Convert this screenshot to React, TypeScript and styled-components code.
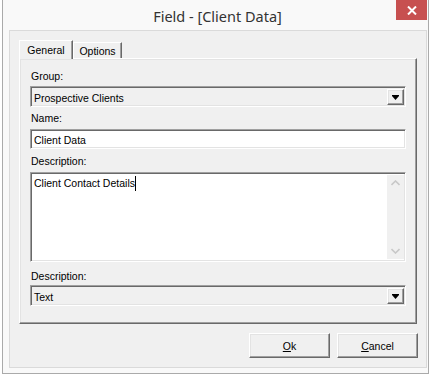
import styled, { createGlobalStyle, css } from "styled-components";

const GlobalStyle = createGlobalStyle`
  html, body {
    margin: 0;
    padding: 0;
    background: #ffffff;
  }
  body {
    font-family: "Liberation Sans", Arial, sans-serif;
    color: #000;
  }
`;

const sunken = css`
  box-sizing: border-box;
  border: 1px solid;
  border-color: #a0a0a0 #ffffff #ffffff #a0a0a0;
  box-shadow: inset 1px 1px 0 #696969, inset -1px -1px 0 #e3e3e3;
`;

const raised = css`
  box-sizing: border-box;
  border: 1px solid;
  border-color: #ffffff #696969 #696969 #ffffff;
  box-shadow: inset -1px -1px 0 #a0a0a0, inset 1px 1px 0 #e3e3e3;
`;

const Window = styled.div`
  position: relative;
  box-sizing: border-box;
  width: 427px;
  height: 374px;
  margin: 0 1px 1px 2px;
  background: #f9f9f9;
  border: 1px solid #aaaaaa;
  border-top: none;
  display: flex;
  flex-direction: column;
`;

const TitleBar = styled.div`
  height: 30px;
  display: flex;
  align-items: center;
  justify-content: center;
  font-family: "Noto Sans", "Open Sans", sans-serif;
  font-size: 14.5px;
  color: #333333;
  padding-top: 1px;
  padding-left: 4px;
  box-sizing: border-box;
`;

const CloseButton = styled.div`
  position: absolute;
  top: 0;
  right: 1px;
  width: 31px;
  height: 20px;
  background: #c75050;
  display: flex;
  align-items: center;
  justify-content: center;
`;

const Client = styled.div`
  margin: 0 1px 5px 6px;
  flex: 1;
  box-sizing: border-box;
  border: 1px solid #dadada;
  background: #f0f0f0;
  padding: 9px 9px 9px 9px;
  display: flex;
  flex-direction: column;
`;

const TabRow = styled.div`
  height: 18px;
  display: flex;
  align-items: flex-end;
  position: relative;
  z-index: 1;
`;

const Tab = styled.div<{ $active?: boolean }>`
  box-sizing: border-box;
  font-size: 10.5px;
  display: flex;
  align-items: center;
  justify-content: center;
  background: #f0f0f0;
  border-top: 1px solid #ffffff;
  border-left: 1px solid #ffffff;
  border-right: 1px solid #696969;
  box-shadow: inset -1px 0 0 #a0a0a0;
  width: ${(p) => (p.$active ? "54px" : "49px")};
  height: ${(p) => (p.$active ? "19px" : "16px")};
  margin-bottom: ${(p) => (p.$active ? "-1px" : "0")};
  padding-top: ${(p) => (p.$active ? "0" : "1px")};
`;

const Panel = styled.div`
  ${raised};
  height: 266px;
  background: #f0f0f0;
  padding: 11px 10px 0 10px;
  display: flex;
  flex-direction: column;
`;

const Label = styled.div<{ $top: number; $gap: number }>`
  font-size: 10.5px;
  line-height: 13px;
  height: 13px;
  padding-left: 1px;
  margin-top: ${(p) => p.$top}px;
  margin-bottom: ${(p) => p.$gap}px;
`;

const Combo = styled.div`
  ${sunken};
  height: 21px;
  background: #f0f0f0;
  display: flex;
  align-items: stretch;
  padding: 2px 1px 1px 3px;
  font-size: 10.5px;
`;

const ComboText = styled.div`
  flex: 1;
  display: flex;
  align-items: center;
  padding-top: 1px;
`;

const DropButton = styled.div`
  ${raised};
  width: 17px;
  background: #f0f0f0;
  display: flex;
  align-items: center;
  justify-content: center;
`;

const TextInput = styled.div`
  ${sunken};
  height: 20px;
  background: #ffffff;
  padding: 2px 3px 0 3px;
  font-size: 10.5px;
  display: flex;
  align-items: center;
`;

const TextArea = styled.div`
  ${sunken};
  height: 90px;
  background: #ffffff;
  display: flex;
  padding: 2px 1px 2px 2px;
  font-size: 10.5px;
`;

const AreaText = styled.div`
  flex: 1;
  padding: 2px 1px;
  line-height: 13px;
  display: flex;
  align-items: flex-start;
`;

const Caret = styled.span`
  display: inline-block;
  width: 1px;
  height: 15px;
  background: #000;
  margin-top: -1px;
`;

const ScrollBar = styled.div`
  width: 17px;
  background: #f0f0f0;
  display: flex;
  flex-direction: column;
  justify-content: space-between;
  align-items: center;
  padding: 5px 0 5px;
`;

const ButtonRow = styled.div`
  margin-top: 9px;
  margin-right: -1px;
  display: flex;
  justify-content: flex-end;
  gap: 7px;
`;

const Button = styled.div`
  ${raised};
  width: 81px;
  height: 25px;
  background: #f0f0f0;
  font-size: 10.5px;
  display: flex;
  align-items: center;
  justify-content: center;
`;

const Access = styled.span`
  text-decoration: underline;
  text-underline-offset: 1px;
`;

const Arrow = () => (
  <svg width="7" height="5" viewBox="0 0 7 5">
    <rect x="0" y="0" width="7" height="1" fill="#000" />
    <polygon points="0,1 7,1 3.5,5" fill="#000" />
  </svg>
);

const Chevron = ({ up }: { up?: boolean }) => (
  <svg width="9" height="6" viewBox="0 0 9 6">
    <polyline
      points={up ? "0.5,5 4.5,1 8.5,5" : "0.5,1 4.5,5 8.5,1"}
      fill="none"
      stroke="#c8c8c8"
      strokeWidth="1.6"
    />
  </svg>
);

export default function App() {
  return (
    <>
      <GlobalStyle />
      <Window>
        <TitleBar>Field - [Client Data]</TitleBar>
        <CloseButton>
          <svg width="10" height="9" viewBox="0 0 10 9">
            <path d="M1 0.5 L9 8.5 M9 0.5 L1 8.5" stroke="#fff" strokeWidth="2" />
          </svg>
        </CloseButton>
        <Client>
          <TabRow>
            <Tab $active>General</Tab>
            <Tab>Options</Tab>
          </TabRow>
          <Panel>
            <Label $top={0} $gap={3}>Group:</Label>
            <Combo>
              <ComboText>Prospective Clients</ComboText>
              <DropButton>
                <Arrow />
              </DropButton>
            </Combo>
            <Label $top={5} $gap={4}>Name:</Label>
            <TextInput>Client Data</TextInput>
            <Label $top={6} $gap={4}>Description:</Label>
            <TextArea>
              <AreaText>
                Client Contact Details
                <Caret />
              </AreaText>
              <ScrollBar>
                <Chevron up />
                <Chevron />
              </ScrollBar>
            </TextArea>
            <Label $top={8} $gap={2}>Description:</Label>
            <Combo>
              <ComboText>Text</ComboText>
              <DropButton>
                <Arrow />
              </DropButton>
            </Combo>
          </Panel>
          <ButtonRow>
            <Button>
              <Access>O</Access>k
            </Button>
            <Button>
              <Access>C</Access>ancel
            </Button>
          </ButtonRow>
        </Client>
      </Window>
    </>
  );
}
